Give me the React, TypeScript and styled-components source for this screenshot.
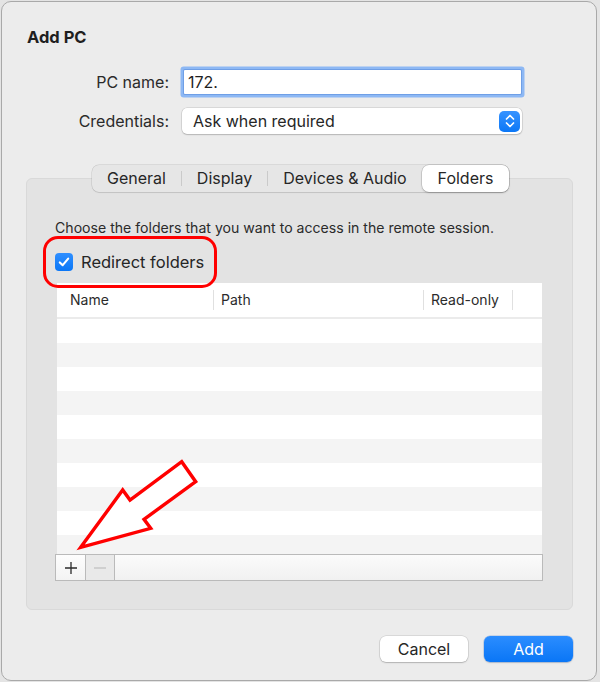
import React from "react";
import styled, { createGlobalStyle } from "styled-components";

const Global = createGlobalStyle`
  html, body { margin: 0; padding: 0; background: #e4e4e4; }
  body { font-family: "Inter", "Noto Sans", sans-serif; color: #262626; -webkit-font-smoothing: antialiased; }
  * { box-sizing: border-box; }
`;

const Window = styled.div`
  width: 596px;
  height: 680px;
  margin: 1px 0 0 1px;
  border: 1px solid #a9a9a9;
  border-radius: 10px;
  background: #ececec;
  padding: 25px 23px 0 24px;
  display: flex;
  flex-direction: column;
`;

const Title = styled.h1`
  margin: 0 0 0 1px;
  font-size: 16.5px;
  line-height: 20px;
  font-weight: 700;
  color: #1f1f1f;
`;

const Form = styled.div`
  display: grid;
  grid-template-columns: 143px 340px;
  column-gap: 13px;
  row-gap: 14px;
  margin-top: 23px;
  align-items: center;
`;

const Label = styled.label`
  text-align: right;
  font-size: 16px;
  line-height: 20px;
  color: #2a2a2a;
`;

const TextField = styled.input`
  width: 337px;
  height: 24px;
  margin-left: 2px;
  border: none;
  outline: none;
  padding: 0 4px;
  background: #fff;
  font-family: inherit;
  font-size: 16px;
  color: #1f1f1f;
  box-shadow: 0 0 0 1px #6f9fe6, 0 0 0 3.5px #8db8f4;
  border-radius: 1px;
`;

const Select = styled.div`
  height: 26px;
  background: #fff;
  border-radius: 5px;
  box-shadow: 0 0 0 0.5px rgba(0, 0, 0, 0.16), 0 1px 1.5px rgba(0, 0, 0, 0.16);
  display: flex;
  align-items: center;
  justify-content: space-between;
  padding: 0 2px 0 11px;
  font-size: 16px;
  color: #262626;
`;

const Stepper = styled.span`
  width: 21px;
  height: 21px;
  border-radius: 5px;
  background: linear-gradient(#3793ff, #0b77f6);
  display: flex;
  align-items: center;
  justify-content: center;
`;

const TabView = styled.div`
  margin-top: 31px;
  display: flex;
  flex-direction: column;
  align-items: center;
`;

const TabBar = styled.div`
  display: flex;
  height: 27px;
  margin-bottom: -14px;
  margin-left: 2px;
  position: relative;
  z-index: 1;
  background: #e6e6e6;
  border-radius: 7px;
  box-shadow: 0 0 0 0.5px rgba(0, 0, 0, 0.14), 0 0.5px 1px rgba(0, 0, 0, 0.08);
`;

const Tab = styled.div<{ $w: number; $active?: boolean }>`
  width: ${(p) => p.$w}px;
  height: 27px;
  padding-bottom: 2px;
  display: flex;
  align-items: center;
  justify-content: center;
  font-size: 16px;
  color: #262626;
  border-radius: 7px;
  background: ${(p) => (p.$active ? "#ffffff" : "transparent")};
  box-shadow: ${(p) =>
    p.$active ? "0 0 0 0.5px rgba(0,0,0,0.2), 0 1px 2px rgba(0,0,0,0.18)" : "none"};
`;

const TabDivider = styled.span`
  width: 1px;
  height: 15px;
  align-self: center;
  background: #cacaca;
`;

const Panel = styled.div`
  align-self: stretch;
  position: relative;
  height: 432px;
  background: #e3e3e3;
  border: 1px solid #d9d9d9;
  border-radius: 6px;
  padding: 40px 28px 0 28px;
  display: flex;
  flex-direction: column;
`;

const Description = styled.p`
  margin: 0;
  font-size: 14.1px;
  line-height: 18px;
  color: #2b2b2b;
`;

const CheckRow = styled.div`
  position: relative;
  margin-top: 15px;
  height: 20px;
  display: flex;
  align-items: center;
  gap: 8px;
  font-size: 16.5px;
  color: #262626;
`;

const CheckBox = styled.span`
  width: 18px;
  height: 18px;
  border-radius: 4px;
  background: linear-gradient(#2f8fff, #0b77f6);
  display: flex;
  align-items: center;
  justify-content: center;
`;

const Highlight = styled.span`
  position: absolute;
  left: -12px;
  top: -16px;
  width: 174px;
  height: 52px;
  border: 3px solid #f00;
  border-radius: 15px;
  pointer-events: none;
`;

const Table = styled.div`
  margin: 11px 2px 0 2px;
  height: 271px;
  background: #fff;
  display: flex;
  flex-direction: column;
  overflow: hidden;
`;

const HeaderRow = styled.div`
  height: 36px;
  flex: none;
  display: flex;
  align-items: center;
  border-bottom: 2px solid #ebebeb;
`;

const HeaderCell = styled.div<{ $w: number; $pad: number }>`
  position: relative;
  width: ${(p) => p.$w}px;
  padding-left: ${(p) => p.$pad}px;
  font-size: 14px;
  line-height: 20px;
  color: #2b2b2b;
  &::after {
    content: "";
    position: absolute;
    right: 0;
    top: 0;
    width: 1px;
    height: 20px;
    background: #e0e0e0;
  }
`;

const Body = styled.div`
  flex: 1;
  overflow: hidden;
`;

const Row = styled.div<{ $alt: boolean }>`
  height: 24px;
  background: ${(p) => (p.$alt ? "#f4f4f4" : "#ffffff")};
`;

const Bar = styled.div`
  height: 27px;
  margin-right: 1px;
  border: 1px solid #bababa;
  background: linear-gradient(#fbfbfb, #f1f1f1);
  display: flex;
`;

const BarButton = styled.span<{ $w: number; $disabled?: boolean }>`
  width: ${(p) => p.$w}px;
  border-right: 1px solid #bababa;
  display: flex;
  align-items: center;
  justify-content: center;
  background: ${(p) => (p.$disabled ? "#e9e9e9" : "linear-gradient(#fdfdfd, #f3f3f3)")};
`;

const Arrow = styled.svg`
  position: absolute;
  left: 49px;
  top: 277px;
  pointer-events: none;
  overflow: visible;
`;

const Footer = styled.div`
  margin-top: 26px;
  display: flex;
  justify-content: flex-end;
  gap: 16px;
`;

const Button = styled.button<{ $w: number; $primary?: boolean }>`
  width: ${(p) => p.$w}px;
  height: 26px;
  border: none;
  border-radius: 6px;
  font-family: inherit;
  font-size: 16px;
  padding: 0;
  color: ${(p) => (p.$primary ? "#ffffff" : "#262626")};
  background: ${(p) => (p.$primary ? "linear-gradient(#2b8dff, #0a76f6)" : "#ffffff")};
  box-shadow: ${(p) =>
    p.$primary
      ? "0 0 0 0.5px rgba(0,80,200,0.3), 0 1px 1.5px rgba(0,0,0,0.15)"
      : "0 0 0 0.5px rgba(0,0,0,0.16), 0 1px 1.5px rgba(0,0,0,0.18)"};
`;

const tabs = [
  { label: "General", w: 89 },
  { label: "Display", w: 85 },
  { label: "Devices & Audio", w: 154 },
  { label: "Folders", w: 87, active: true },
];

export default function App() {
  return (
    <>
      <Global />
      <Window>
        <Title>Add PC</Title>
        <Form>
          <Label>PC name:</Label>
          <TextField readOnly value="172." />
          <Label>Credentials:</Label>
          <Select>
            <span>Ask when required</span>
            <Stepper>
              <svg width="12" height="16" viewBox="0 0 12 16">
                <path d="M2.5 6 L6 2.5 L9.5 6" fill="none" stroke="#fff" strokeWidth="1.7" strokeLinecap="round" strokeLinejoin="round" />
                <path d="M2.5 10 L6 13.5 L9.5 10" fill="none" stroke="#fff" strokeWidth="1.7" strokeLinecap="round" strokeLinejoin="round" />
              </svg>
            </Stepper>
          </Select>
        </Form>

        <TabView>
          <TabBar>
            {tabs.map((t, i) => {
              const next = tabs[i + 1];
              const showDivider = next && !t.active && !next.active;
              return (
                <React.Fragment key={t.label}>
                  <Tab $w={t.w} $active={t.active}>{t.label}</Tab>
                  {showDivider && <TabDivider />}
                </React.Fragment>
              );
            })}
          </TabBar>
          <Panel>
            <Description>Choose the folders that you want to access in the remote session.</Description>
            <CheckRow>
              <CheckBox>
                <svg width="14" height="14" viewBox="0 0 14 14">
                  <path d="M2.8 7.4 L5.7 10.2 L11.2 3.6" fill="none" stroke="#fff" strokeWidth="2.1" strokeLinecap="round" strokeLinejoin="round" />
                </svg>
              </CheckBox>
              <span>Redirect folders</span>
              <Highlight />
            </CheckRow>
            <Table>
              <HeaderRow>
                <HeaderCell $w={157} $pad={13}>Name</HeaderCell>
                <HeaderCell $w={210} $pad={7}>Path</HeaderCell>
                <HeaderCell $w={89} $pad={7}>Read-only</HeaderCell>
              </HeaderRow>
              <Body>
                {Array.from({ length: 10 }).map((_, i) => (
                  <Row key={i} $alt={i % 2 === 1} />
                ))}
              </Body>
            </Table>
            <Bar>
              <BarButton $w={30}>
                <svg width="14" height="14" viewBox="0 0 14 14">
                  <path d="M7 1 V13 M1 7 H13" stroke="#2a2a2a" strokeWidth="1.3" />
                </svg>
              </BarButton>
              <BarButton $w={29} $disabled>
                <svg width="14" height="14" viewBox="0 0 14 14">
                  <path d="M1 7 H13" stroke="#c2c2c2" strokeWidth="1.3" />
                </svg>
              </BarButton>
            </Bar>
            <Arrow width="124" height="96" viewBox="76 456 124 96">
              <polygon
                points="80.7,547.3 122.7,490 130,500 181.7,461.7 195.7,481.7 144,519.3 150.7,528.3"
                fill="#fff"
                stroke="#f00"
                strokeWidth="3.4"
                strokeLinejoin="miter"
              />
            </Arrow>
          </Panel>
        </TabView>

        <Footer>
          <Button $w={88}>Cancel</Button>
          <Button $w={89} $primary>Add</Button>
        </Footer>
      </Window>
    </>
  );
}
